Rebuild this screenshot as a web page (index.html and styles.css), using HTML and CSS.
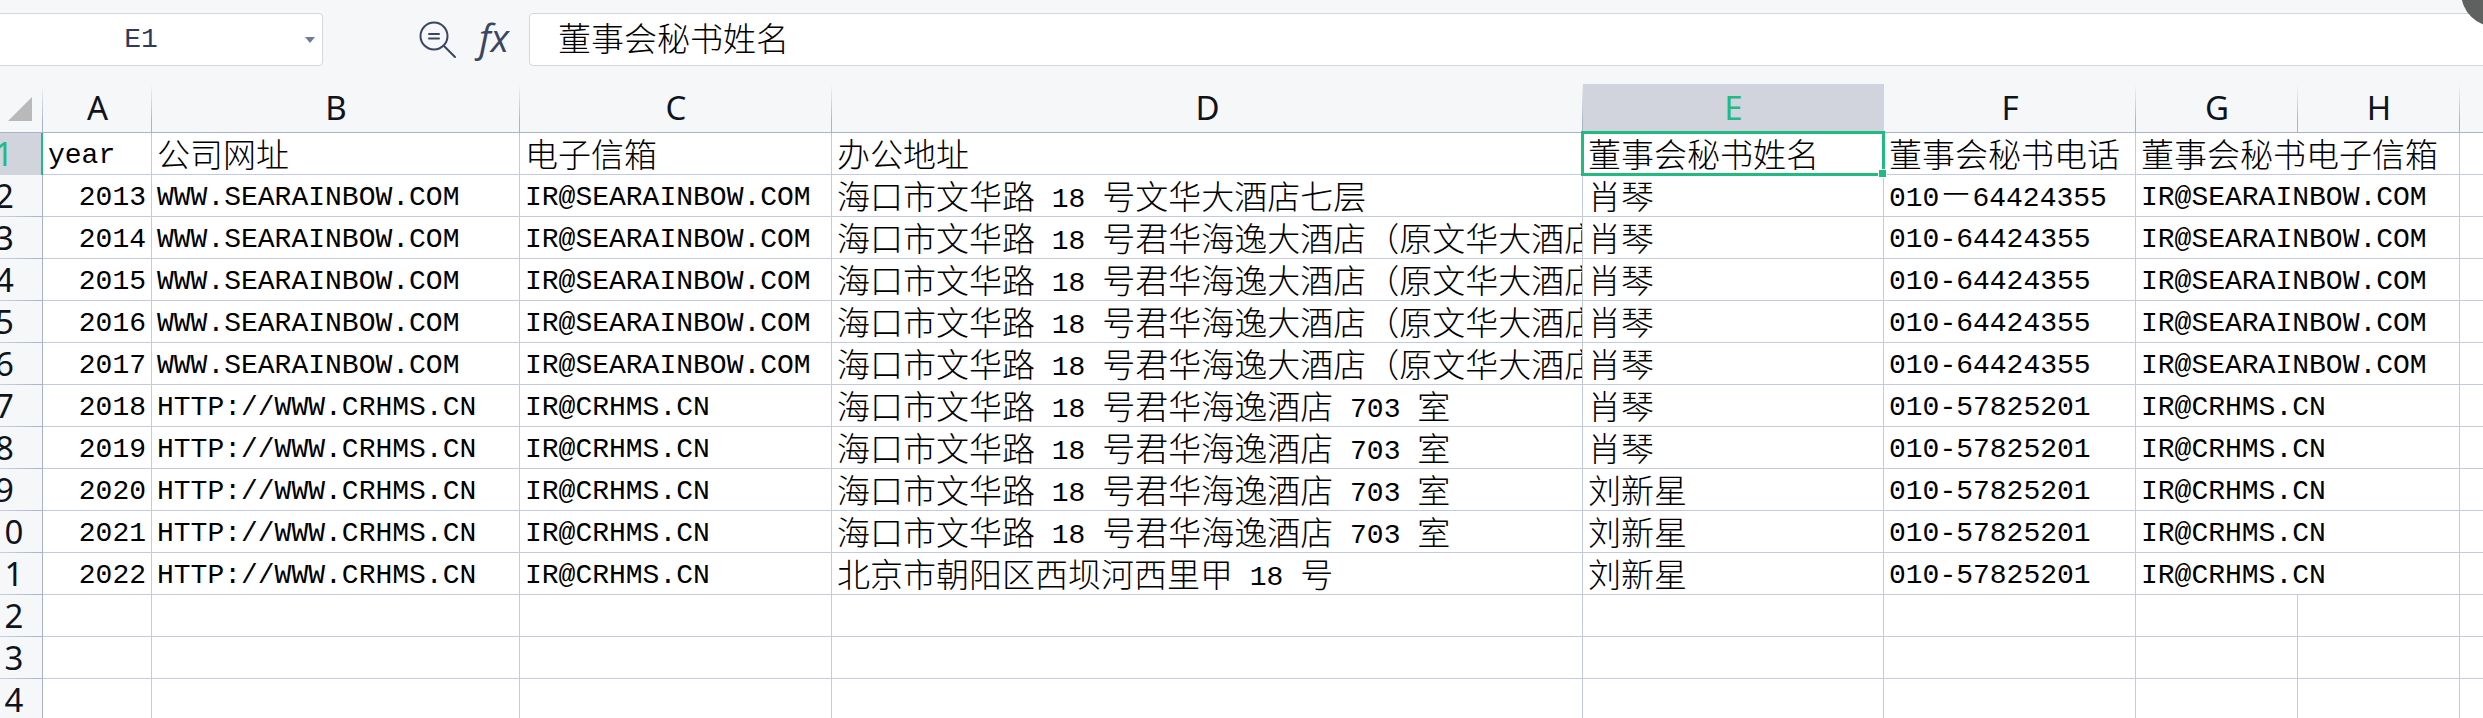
FILE: index.html
```html
<!DOCTYPE html>
<html lang="zh-CN">
<head>
    <meta charset="UTF-8">
    <meta name="viewport" content="width=device-width, initial-scale=1.0">
    <title>董事会秘书</title>
    <link rel="stylesheet" href="styles.css">
</head>
<body>
    <div class="formula-bar">
        <div class="name-box">
            <input type="text" class="name-input" aria-label="名称框" value="E1">
            <button type="button" class="name-arrow" aria-label="展开">
                <svg width="10" height="6" viewBox="0 0 10 6"><path d="M0 0H10L5 6Z" fill="#6f7b98"/></svg>
            </button>
        </div>
        <div class="tools">
            <button type="button" class="tool" aria-label="查找">
                <svg width="38" height="38" viewBox="0 0 38 38" fill="none" stroke="#3a4661" stroke-width="2" stroke-linecap="round">
                    <circle cx="15" cy="15" r="13.5"/>
                    <path d="M25 25L36 36M10 13H20M10 17.5H20"/>
                </svg>
            </button>
            <button type="button" class="tool fx">fx</button>
        </div>
        <input type="text" class="formula-input" aria-label="编辑栏" value="董事会秘书姓名">
    </div>
    <div class="float-ball"></div>

    <table class="sheet">
        <colgroup>
            <col class="col-num"><col class="col-a"><col class="col-b"><col class="col-c"><col class="col-d">
            <col class="col-e"><col class="col-f"><col class="col-g"><col class="col-h"><col>
        </colgroup>
        <thead>
            <tr>
                <th class="corner"><svg width="24" height="24" viewBox="0 0 24 24"><path d="M24 0V24H0Z" fill="#b9b9b9"/></svg></th>
                <th>A</th><th>B</th><th>C</th><th>D</th><th class="active">E</th><th>F</th><th>G</th><th>H</th><th></th>
            </tr>
        </thead>
        <tbody>
            <!-- Encabezados de los datos -->
            <tr>
                <th class="active">1</th>
                <td>year</td>
                <td class="cn">公司网址</td>
                <td class="cn">电子信箱</td>
                <td class="cn">办公地址</td>
                <td class="cn selected">董事会秘书姓名</td>
                <td class="cn">董事会秘书电话</td>
                <td class="cn" colspan="2">董事会秘书电子信箱</td>
                <td></td>
            </tr>
            <tr>
                <th>2</th>
                <td class="year">2013</td>
                <td>WWW.SEARAINBOW.COM</td>
                <td>IR@SEARAINBOW.COM</td>
                <td class="cn">海口市文华路<span class="num"> 18 </span>号文华大酒店七层</td>
                <td class="cn">肖琴</td>
                <td>010<span class="cn">－</span>64424355</td>
                <td colspan="2">IR@SEARAINBOW.COM</td>
                <td></td>
            </tr>
            <tr>
                <th>3</th>
                <td class="year">2014</td>
                <td>WWW.SEARAINBOW.COM</td>
                <td>IR@SEARAINBOW.COM</td>
                <td class="cn long">海口市文华路<span class="num"> 18 </span>号君华海逸大酒店（原文华大酒店</td>
                <td class="cn">肖琴</td>
                <td>010-64424355</td>
                <td colspan="2">IR@SEARAINBOW.COM</td>
                <td></td>
            </tr>
            <tr>
                <th>4</th>
                <td class="year">2015</td>
                <td>WWW.SEARAINBOW.COM</td>
                <td>IR@SEARAINBOW.COM</td>
                <td class="cn long">海口市文华路<span class="num"> 18 </span>号君华海逸大酒店（原文华大酒店</td>
                <td class="cn">肖琴</td>
                <td>010-64424355</td>
                <td colspan="2">IR@SEARAINBOW.COM</td>
                <td></td>
            </tr>
            <tr>
                <th>5</th>
                <td class="year">2016</td>
                <td>WWW.SEARAINBOW.COM</td>
                <td>IR@SEARAINBOW.COM</td>
                <td class="cn long">海口市文华路<span class="num"> 18 </span>号君华海逸大酒店（原文华大酒店</td>
                <td class="cn">肖琴</td>
                <td>010-64424355</td>
                <td colspan="2">IR@SEARAINBOW.COM</td>
                <td></td>
            </tr>
            <tr>
                <th>6</th>
                <td class="year">2017</td>
                <td>WWW.SEARAINBOW.COM</td>
                <td>IR@SEARAINBOW.COM</td>
                <td class="cn long">海口市文华路<span class="num"> 18 </span>号君华海逸大酒店（原文华大酒店</td>
                <td class="cn">肖琴</td>
                <td>010-64424355</td>
                <td colspan="2">IR@SEARAINBOW.COM</td>
                <td></td>
            </tr>
            <tr>
                <th>7</th>
                <td class="year">2018</td>
                <td>HTTP://WWW.CRHMS.CN</td>
                <td>IR@CRHMS.CN</td>
                <td class="cn">海口市文华路<span class="num"> 18 </span>号君华海逸酒店<span class="num"> 703 </span>室</td>
                <td class="cn">肖琴</td>
                <td>010-57825201</td>
                <td colspan="2">IR@CRHMS.CN</td>
                <td></td>
            </tr>
            <tr>
                <th>8</th>
                <td class="year">2019</td>
                <td>HTTP://WWW.CRHMS.CN</td>
                <td>IR@CRHMS.CN</td>
                <td class="cn">海口市文华路<span class="num"> 18 </span>号君华海逸酒店<span class="num"> 703 </span>室</td>
                <td class="cn">肖琴</td>
                <td>010-57825201</td>
                <td colspan="2">IR@CRHMS.CN</td>
                <td></td>
            </tr>
            <tr>
                <th>9</th>
                <td class="year">2020</td>
                <td>HTTP://WWW.CRHMS.CN</td>
                <td>IR@CRHMS.CN</td>
                <td class="cn">海口市文华路<span class="num"> 18 </span>号君华海逸酒店<span class="num"> 703 </span>室</td>
                <td class="cn">刘新星</td>
                <td>010-57825201</td>
                <td colspan="2">IR@CRHMS.CN</td>
                <td></td>
            </tr>
            <tr>
                <th>10</th>
                <td class="year">2021</td>
                <td>HTTP://WWW.CRHMS.CN</td>
                <td>IR@CRHMS.CN</td>
                <td class="cn">海口市文华路<span class="num"> 18 </span>号君华海逸酒店<span class="num"> 703 </span>室</td>
                <td class="cn">刘新星</td>
                <td>010-57825201</td>
                <td colspan="2">IR@CRHMS.CN</td>
                <td></td>
            </tr>
            <tr>
                <th>11</th>
                <td class="year">2022</td>
                <td>HTTP://WWW.CRHMS.CN</td>
                <td>IR@CRHMS.CN</td>
                <td class="cn">北京市朝阳区西坝河西里甲<span class="num"> 18 </span>号</td>
                <td class="cn">刘新星</td>
                <td>010-57825201</td>
                <td colspan="2">IR@CRHMS.CN</td>
                <td></td>
            </tr>
            <!-- Filas vacías -->
            <tr><th>12</th><td></td><td></td><td></td><td></td><td></td><td></td><td></td><td></td><td></td></tr>
            <tr><th>13</th><td></td><td></td><td></td><td></td><td></td><td></td><td></td><td></td><td></td></tr>
            <tr><th>14</th><td></td><td></td><td></td><td></td><td></td><td></td><td></td><td></td><td></td></tr>
        </tbody>
    </table>
</body>
</html>
```

FILE: styles.css
```css
* {
    box-sizing: border-box;
}
html {
    overflow: hidden;
}
body {
    height: 100vh;
    margin: 0;
    overflow: hidden;
    background-color: #f5f7f9;
    font-family: "Liberation Mono", "Noto Sans CJK SC", monospace;
    font-size: 28px;
    color: #000;
}
input, button {
    margin: 0;
    padding: 0;
    border: none;
    background: none;
    font: inherit;
    color: inherit;
}

/* Barra de fórmulas */
.formula-bar {
    display: flex;
    align-items: center;
    padding-top: 13px;
    margin-left: -24px;
    margin-right: -8px;
}
.name-box {
    display: flex;
    align-items: center;
    width: 347px;
    height: 53px;
    padding-right: 7px;
    background-color: #fff;
    border: 1px solid #d5d7dc;
    border-radius: 4px;
    color: #2f3b57;
}
.name-input {
    flex: 1;
    min-width: 0;
    height: 100%;
    text-align: center;
}
.name-arrow {
    display: flex;
    padding: 4px 0;
}
.tools {
    display: flex;
    align-items: center;
    justify-content: flex-end;
    gap: 22px;
    width: 206px;
    padding-right: 20px;
}
.tool {
    display: flex;
}
.fx {
    height: 44px;
    font-family: "Open Sans", sans-serif;
    font-style: italic;
    font-weight: 400;
    font-size: 38px;
    line-height: 38px;
    color: #3a4661;
}
.formula-input {
    flex: 1;
    min-width: 0;
    height: 53px;
    padding: 0 28px 6px;
    background-color: #fff;
    border: 1px solid #d5d7dc;
    border-radius: 4px;
    font-family: "Noto Sans CJK SC", sans-serif;
    font-size: 33px;
    font-weight: 300;
}
.float-ball {
    position: absolute;
    top: -43px;
    right: -48px;
    width: 70px;
    height: 70px;
    border-radius: 50%;
    background-color: #5f6161;
}

/* Hoja de cálculo */
.sheet {
    width: calc(100% + 33px);
    margin: 18px 0 0 -33px;
    table-layout: fixed;
    border-collapse: separate;
    border-spacing: 0;
}
.col-num { width: 76px; }
.col-a { width: 109px; }
.col-b { width: 368px; }
.col-c { width: 312px; }
.col-d { width: 751px; }
.col-e { width: 301px; }
.col-f { width: 252px; }
.col-g, .col-h { width: 162px; }

.sheet th {
    padding: 0;
    font-family: "Noto Sans", sans-serif;
    font-size: 33px;
    font-weight: 400;
    line-height: 40px;
    color: #10131c;
}
.sheet thead th {
    height: 49px;
    border-bottom: 1px solid #a9b2ca;
    background: linear-gradient(to bottom, #f5f7f9, #a9b2ca 80%) right top / 1px 100% no-repeat;
}
.sheet thead .corner {
    padding: 1px 11px 0 0;
    text-align: right;
    line-height: 0;
}
.sheet tbody th {
    height: 42px;
    border-right: 1px solid #a9b2ca;
    background: linear-gradient(to right, #e4e8ef, #a9b2ca) left bottom / 100% 1px no-repeat;
}
.sheet thead .active,
.sheet tbody .active {
    background: #d1d4dd;
    color: #21ba80;
}
.sheet tbody .active {
    border-right: 2px solid #21ba80;
}
.sheet td {
    height: 42px;
    padding: 4px 5px 0;
    background-color: #fff;
    border-right: 1px solid #c3cade;
    border-bottom: 1px solid #c3cade;
    line-height: 30px;
    white-space: nowrap;
}
.sheet td.year {
    text-align: right;
}
.sheet .cn {
    font-family: "Noto Sans CJK SC", sans-serif;
    font-size: 33px;
    font-weight: 300;
    line-height: 30px;
}
.sheet td.cn {
    padding-top: 0;
    padding-bottom: 2px;
}
.sheet td.long {
    overflow: hidden;
}
.sheet .num {
    font-family: "Liberation Mono", monospace;
    font-size: 28px;
    font-weight: 400;
    line-height: 20px;
    vertical-align: 2px;
    white-space: pre;
}
.sheet span.cn {
    line-height: 20px;
}
.sheet th:last-child {
    background: none;
}
.sheet td:last-child {
    border-right: none;
}

/* Celda seleccionada */
.sheet td.selected {
    position: relative;
}
.selected::before {
    content: "";
    position: absolute;
    top: -2px;
    right: -2px;
    bottom: -2px;
    left: -2px;
    border: 3px solid #21ba80;
}
.selected::after {
    content: "";
    position: absolute;
    right: -4px;
    bottom: -4px;
    width: 7px;
    height: 7px;
    background-color: #21ba80;
    border: 1px solid #fff;
}
```
